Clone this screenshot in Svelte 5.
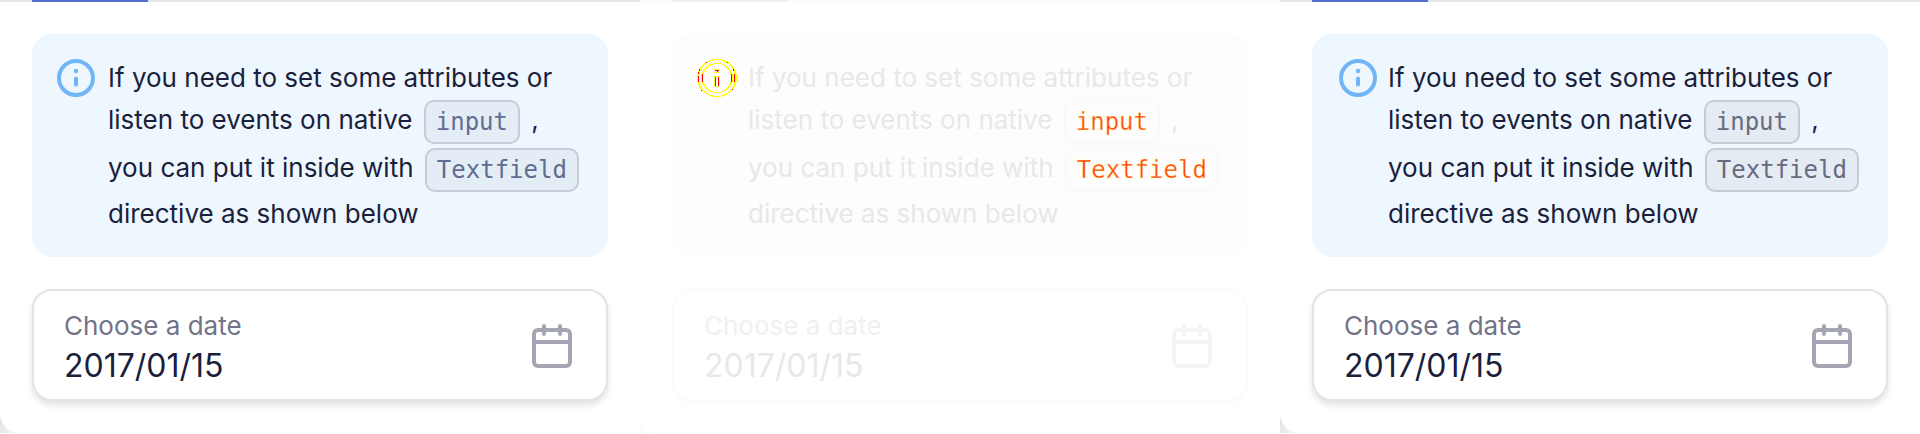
<script>
  const panels = [
    { id: 'before', kind: 'slate', cx: 20 },
    { id: 'delta', kind: 'faded', cx: 20 },
    { id: 'after', kind: 'neutral', cx: 22 }
  ];
  let dates = $state(['2017/01/15', '2017/01/15', '2017/01/15']);
</script>

<main class="board">
  {#each panels as panel, i (panel.id)}
    <div class="frame {panel.kind}">
      <section class="panel">
        <div class="tabs"><span class="active"></span></div>
        <div class="content">
          <div class="notice">
            <svg class="info" viewBox="0 0 40 40" aria-hidden="true">
              {#if panel.kind === 'faded'}
                <g shape-rendering="crispEdges" fill="none" stroke="#ffff00" stroke-width="1">
                  <ellipse cx="21" cy="20" rx="17" ry="17" stroke="#f6f6f6" stroke-width="4" />
                  <ellipse cx="21" cy="20" rx="19.5" ry="18.5" />
                  <ellipse cx="21" cy="20" rx="18.5" ry="18.5" />
                  <ellipse cx="21" cy="20" rx="14.5" ry="14.5" />
                  <ellipse cx="21" cy="20" rx="15.5" ry="14.5" />
                  <path d="M18 11.5h6M18 14.5h5M18.5 18v10M23.5 18v10M19 18.5h5M19 28.5h4" />
                  <path stroke="#ff0000" d="M2.5 14v2M2.500 18v6M6.5 16v8M35.5 16v8M38.5 16v8M3.5 10.500v2M37.500 10.500v2M10 4.500h1M31 4.500h1M5 32.500h1M36 31.500h1M19 12.500h4M21.500 12v2M19.500 19v9M22.500 19v9" />
                </g>
              {:else}
                <circle cx={panel.cx} cy="20" r="17" fill="none" stroke="currentColor" stroke-width="4" />
                <circle cx={panel.cx} cy="13" r="2.2" fill="currentColor" />
                <path d="M{panel.cx} 20.500v6" stroke="currentColor" stroke-width="4" stroke-linecap="round" />
              {/if}
            </svg>
            <p>
              If you need to set some attributes or listen to events on native <code>input</code> ,
              you can put it inside with <code>Textfield</code> directive as shown below
            </p>
          </div>
          <div class="field">
            <div class="entry">
              <label for="date-{panel.id}">Choose a date</label>
              <input id="date-{panel.id}" type="text" bind:value={dates[i]} />
            </div>
            <svg class="calendar" viewBox="0 0 48 48" aria-hidden="true">
              <g fill="none" stroke="currentColor" stroke-width="4">
                <rect x="6" y="9" width="36" height="36" rx="4" />
                <path d="M6 21h36" />
                <path d="M16 5v8M32 5v8" stroke-linecap="round" />
              </g>
            </svg>
          </div>
        </div>
      </section>
    </div>
  {/each}
</main>

<style>
  :global(body) {
    background: #fff;
  }
  .board {
    display: grid;
    grid-template-columns: repeat(3, minmax(0, 1fr));
    font-family: Inter, 'Open Sans', sans-serif;
    font-size: 26px;
    line-height: 40px;
  }
  .frame {
    --ink: #1b1f3b;
    --label: #717389;
    --icon: #a4a6b4;
    --line: #e4e4e4;
    --accent: #526ed3;
    --notice: #eef6fe;
    --info: #70b6f6;
    --code: #5f6e90;
    --code-bg: #e4edf6;
    --code-line: #c5ccd7;
    --corner: #e6e6e6;
    --shadow: rgba(0, 0, 0, 0.12);
    background: linear-gradient(to right, var(--corner), #fff 20px);
    overflow: hidden;
  }
  .neutral {
    --code: #676b80;
    --code-bg: #e4ebf3;
  }
  .faded {
    --ink: #e8e8e8;
    --label: #f0f0f0;
    --icon: #f5f5f5;
    --line: #fbfbfb;
    --accent: #efefef;
    --notice: #fdfdfd;
    --code: #ff3300;
    --code-bg: #fdfdfd;
    --code-line: #fafafa;
    --corner: #fcfcfc;
    --shadow: rgba(0, 0, 0, 0.012);
  }
  .panel {
    background: #fff;
    border-bottom-left-radius: 20px;
  }
  .tabs {
    height: 2px;
    padding-left: 32px;
    background: var(--line);
  }
  .active {
    display: block;
    width: 116px;
    height: 2px;
    background: var(--accent);
  }
  .content {
    display: flex;
    flex-direction: column;
    gap: 32px;
    padding: 32px;
  }
  .notice {
    display: flex;
    gap: 12px;
    padding: 24px 24px 23px;
    border-radius: 20px;
    background: var(--notice);
    color: var(--ink);
  }
  .info {
    flex: none;
    width: 40px;
    height: 40px;
    overflow: visible;
    color: var(--info);
  }
  p {
    margin: 0;
    min-width: 0;
  }
  code {
    display: inline-block;
    box-sizing: border-box;
    margin: 2px 4px;
    padding: 0 10px;
    border: 2px solid var(--code-line);
    border-radius: 10px;
    background: var(--code-bg);
    color: var(--code);
    font-family: 'DejaVu Sans Mono', monospace;
    font-size: 24px;
    line-height: 40px;
    vertical-align: middle;
  }
  .faded code {
    -webkit-text-stroke: 1px rgba(255, 255, 160, 0.5);
  }
  .field {
    display: flex;
    align-items: center;
    justify-content: space-between;
    padding: 15px 30px;
    border: 2px solid var(--line);
    border-radius: 20px;
    background: #fff;
    box-shadow: 0 4px 6px var(--shadow);
  }
  .entry {
    display: flex;
    flex: 1;
    flex-direction: column;
    min-width: 0;
  }
  label {
    color: var(--label);
    line-height: 40px;
  }
  input {
    width: 100%;
    height: 38px;
    padding: 2px 0 0;
    border: 0;
    outline: 0;
    background: transparent;
    color: var(--ink);
    font: inherit;
    font-size: 32px;
    box-sizing: border-box;
  }
  .calendar {
    flex: none;
    width: 48px;
    height: 48px;
    color: var(--icon);
  }
</style>
